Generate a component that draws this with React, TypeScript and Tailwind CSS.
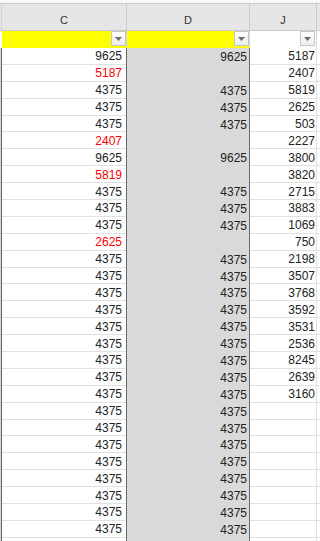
import React from 'react'

type Cell = { v: string; red?: boolean }

const cCol: Cell[] = [
  { v: '9625' },
  { v: '5187', red: true },
  { v: '4375' },
  { v: '4375' },
  { v: '4375' },
  { v: '2407', red: true },
  { v: '9625' },
  { v: '5819', red: true },
  { v: '4375' },
  { v: '4375' },
  { v: '4375' },
  { v: '2625', red: true },
  ...Array.from({ length: 17 }, () => ({ v: '4375' })),
  { v: '' },
]

const dCol: string[] = [
  '9625', '', '4375', '4375', '4375', '', '9625', '', '4375', '4375', '4375', '',
  ...Array.from({ length: 17 }, () => '4375'),
  '',
]

const jCol: string[] = [
  '5187', '2407', '5819', '2625', '503', '2227', '3800', '3820', '2715', '3883', '1069',
  '750', '2198', '3507', '3768', '3592', '3531', '2536', '8245', '2639', '3160',
]

function FilterButton() {
  return (
    <div className="w-[15px] h-[15px] border border-[#c6c6c6] bg-gradient-to-b from-white to-[#ededed] flex items-center justify-center">
      <svg width="7" height="4" viewBox="0 0 7 4">
        <polygon points="0,0 7,0 3.5,4" fill="#6b6b6b" />
      </svg>
    </div>
  )
}

export default function App() {
  const font = { fontFamily: '"Liberation Sans", Arial, sans-serif' }

  return (
    <div className="w-[320px] h-[541px] overflow-hidden bg-white text-[12px] text-[#222]" style={font}>
      <div className="h-[3px] bg-[#f7f7f7]" />

      {/* column headers */}
      <div className="flex h-[28px] bg-[#e6e6e6] border-y border-[#cbcbcb] text-[11px] text-[#333]">
        <div className="w-[2px] border-r border-[#d2d2d2]" />
        <div className="w-[124px] flex items-end justify-center pb-[2px]">C</div>
        <div className="w-[124px] border-x border-[#cbcbcb] flex items-end justify-center pb-[2px]">D</div>
        <div className="w-[67px] border-r border-[#cbcbcb] flex items-end justify-center pb-[2px]">J</div>
        <div className="flex-1" />
      </div>

      {/* filter row */}
      <div className="flex h-[17px]">
        <div className="w-[2px] bg-white" />
        <div className="w-[124px] bg-[#ffff00] flex items-start justify-end">
          <FilterButton />
        </div>
        <div className="w-[124px] bg-[#ffff00] border-x border-[#d6d6d6] flex items-start justify-end">
          <FilterButton />
        </div>
        <div className="w-[67px] bg-white border-r border-[#d6d6d6] flex items-start justify-end pr-[1px]">
          <FilterButton />
        </div>
        <div className="flex-1 bg-white" />
      </div>

      {/* data rows */}
      {cCol.map((c, i) => (
        <div key={i} className="flex h-[16.9px] leading-none">
          <div className="w-[2px] bg-[#d8d8d8] border-r border-[#5f5f5f]" />
          <div
            className={`w-[124px] border-b border-[#e1e1e1] flex items-center justify-end pr-[4px] pt-[1px] ${
              c.red ? 'text-[#ff0000]' : ''
            }`}
          >
            {c.v}
          </div>
          <div className="w-[124px] bg-[#d9d9d9] border-x border-[#6a6a6a] flex items-center justify-end pr-[2px] pt-[1px]">
            {dCol[i]}
          </div>
          <div className="w-[67px] border-b border-r border-[#e1e1e1] flex items-center justify-end pr-[1px] pt-[1px]">
            {jCol[i] ?? ''}
          </div>
          <div className="flex-1 border-b border-[#e1e1e1]" />
        </div>
      ))}
    </div>
  )
}
